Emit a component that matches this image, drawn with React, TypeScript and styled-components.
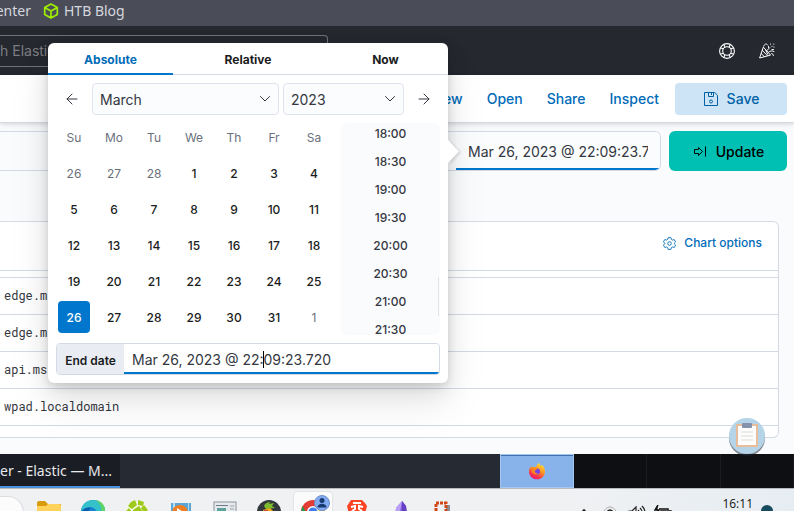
import React, { useEffect, useRef } from "react";
import styled, { createGlobalStyle } from "styled-components";

const c = {
  line: "#d3dae6",
  page: "#fafbfd",
  text: "#343741",
  ink: "#1a1c21",
  muted: "#69707d",
  link: "#006bb8",
  primary: "#0077cc",
};
const inter = `Inter, "Liberation Sans", sans-serif`;
const noto = `"Noto Sans", sans-serif`;

const Global = createGlobalStyle`
  *, *::before, *::after { box-sizing: border-box; }
  body { margin: 0; background: ${c.page}; }
  button, input, select { font: inherit; color: inherit; margin: 0; }
  button { border: 0; padding: 0; background: none; cursor: pointer; }
  svg { display: block; flex: none; }
`;

const Screen = styled.div`
  position: relative;
  height: 100vh;
  overflow: hidden;
  display: flex;
  flex-direction: column;
  font-family: ${inter};
  font-size: 14px;
  line-height: 20px;
  color: ${c.text};
  background: ${c.page};
  > * { flex: none; }
`;

const Bookmarks = styled.nav`
  display: flex;
  align-items: center;
  gap: 12px;
  height: 26px;
  padding-bottom: 4px;
  background: #4a4d58;
  color: #d5d7de;
  font-family: ${noto};
  font-size: 14px;
`;
const Bookmark = styled.a<{ $cut?: boolean }>`
  display: flex;
  align-items: center;
  justify-content: flex-end;
  gap: 5px;
  width: ${(p) => (p.$cut ? "31px" : "auto")};
  color: inherit;
  text-decoration: none;
`;

const Header = styled.header`
  display: flex;
  align-items: center;
  justify-content: space-between;
  height: 49px;
  padding-right: 19px;
  background: #25282f;
  color: #fff;
`;
const SearchBox = styled.input`
  width: 328px;
  height: 32px;
  padding: 0;
  border: 1px solid #6f7277;
  border-left: 0;
  border-radius: 0 4px 4px 0;
  background: transparent;
  outline: 0;
  &::placeholder { color: #7b7d82; opacity: 1; }
`;
const HeaderIcons = styled.div`
  display: flex;
  gap: 24px;
`;

const Toolbar = styled.nav`
  position: relative;
  display: flex;
  align-items: center;
  justify-content: flex-end;
  gap: 8px;
  height: 48px;
  padding-right: 7px;
  background: #fff;
  border-bottom: 1px solid ${c.line};
  box-shadow: 0 1px 4px rgba(0, 0, 0, 0.12), 0 3px 8px rgba(0, 0, 0, 0.04);
`;
const ToolLink = styled.button`
  padding: 0 8px;
  color: ${c.link};
  font-weight: 500;
`;
const SaveButton = styled.button`
  display: flex;
  align-items: center;
  justify-content: center;
  gap: 8px;
  width: 112px;
  height: 32px;
  border-radius: 4px;
  background: #cce4f5;
  color: #0061a6;
  font-weight: 500;
`;

const QueryBar = styled.section`
  display: flex;
  gap: 8px;
  padding: 8px 7px 50px 0;
`;
const RangeControl = styled.div`
  display: flex;
  flex: 1;
  justify-content: flex-end;
  height: 40px;
  border: 1px solid ${c.line};
  border-left: 0;
  border-radius: 0 6px 6px 0;
  overflow: hidden;
`;
const RangeEnd = styled.input`
  width: 204px;
  padding: 2px 12px 0;
  border: 0;
  outline: 0;
  background: linear-gradient(${c.primary}, ${c.primary}) bottom / 100% 2px no-repeat #fbfcfd;
`;
const UpdateButton = styled.button`
  display: flex;
  align-items: center;
  justify-content: center;
  gap: 8px;
  width: 118px;
  height: 40px;
  padding-top: 2px;
  border-radius: 6px;
  background: #00bfb3;
  color: #000;
  font-weight: 500;
`;

const Panel = styled.section`
  margin: 0 15px 16px 0;
  padding-bottom: 11px;
  background: #fff;
  border: 1px solid ${c.line};
  border-left: 0;
  border-radius: 0 6px 6px 0;
`;
const PanelHead = styled.div`
  display: flex;
  justify-content: flex-end;
  padding: 11px 16px 17px;
`;
const ChartOptions = styled.button`
  display: flex;
  align-items: center;
  gap: 8px;
  color: ${c.link};
  font-size: 12px;
  font-weight: 500;
`;
const Hosts = styled.table`
  width: 100%;
  border-collapse: collapse;
  font: 12px/20px "Roboto Mono", "Liberation Mono", monospace;
  th { height: 7px; padding: 0; border: solid ${c.line}; border-width: 1px 0; }
  td { height: 37px; padding: 0 4px 3px; border-bottom: 1px solid ${c.line}; }
`;

const TaskPanel = styled.footer`
  display: flex;
  justify-content: space-between;
  height: 34px;
  background: #262a33;
  color: #e8e9eb;
  font-family: ${noto};
`;
const TaskButton = styled.button`
  width: 120px;
  padding: 2px 10px 0 0;
  text-align: right;
  white-space: nowrap;
  background: #1a1d24;
  border-bottom: 2px solid #4b8fe0;
`;
const Pager = styled.div`
  display: grid;
  grid-template-columns: repeat(4, 1fr);
  width: 37%;
`;
const Workspace = styled.button<{ $active?: boolean }>`
  display: grid;
  place-items: center;
  background: ${(p) => (p.$active ? "#88b2ea" : "#0e0f13")};
  border: ${(p) => (p.$active ? "1px solid #a4c7f2" : "0 solid #1a1c21")};
  border-right-width: 1px;
  box-shadow: ${(p) => (p.$active ? "inset 0 1px #3f70aa" : "none")};
`;

const DesktopBar = styled.footer`
  display: flex;
  justify-content: space-between;
  height: 47px;
  border-top: 1px solid #b9babd;
  background: linear-gradient(90deg, #f0f1f3 70%, #e6edf2);
  color: #111;
`;
const Apps = styled.div`
  display: flex;
  align-items: center;
`;
const StartSearch = styled.span`
  width: 24px;
  height: 32px;
  margin-right: 3px;
  border: 1px solid #dcdee1;
  border-left: 0;
  border-radius: 0 16px 16px 0;
  background: #fcfcfd;
`;
const AppButton = styled.button<{ $open?: boolean }>`
  display: grid;
  place-items: center;
  position: relative;
  width: 38px;
  height: 40px;
  margin: 0 3px;
  border-radius: 4px;
  background: ${(p) => (p.$open ? "#fbfbfc" : "transparent")};
  box-shadow: ${(p) => (p.$open ? "0 0 1px 1px #e2e3e5" : "none")};
`;
const Person = styled.span`
  position: absolute;
  top: 3px;
  right: 2px;
`;
const Tray = styled.div`
  display: flex;
  align-items: flex-start;
  gap: 8px;
  padding: 5px 21px 0 0;
`;
const TrayIcons = styled.div`
  display: flex;
  gap: 8px;
  padding: 11px 42px 0 0;
`;
const Clock = styled.time`
  font: 12px/20px "Open Sans", "Noto Sans", sans-serif;
`;
const Notice = styled.span`
  width: 12px;
  height: 12px;
  margin-top: 11px;
  border-radius: 50%;
  background: #164b5f;
`;

const Clip = styled.button`
  position: absolute;
  right: 28px;
  top: 417px;
`;

/* Date popover */
const Popover = styled.section`
  position: absolute;
  left: 48px;
  top: 43px;
  width: 400px;
  border-radius: 6px;
  background: #fff;
  box-shadow: 0 3px 9px rgba(0, 0, 0, 0.13), 0 9px 24px rgba(0, 0, 0, 0.09),
    0 22px 43px rgba(0, 0, 0, 0.08);
`;
const Pointer = styled.span`
  position: absolute;
  left: 100%;
  top: 97px;
  filter: drop-shadow(2px 1px 1px rgba(0, 0, 0, 0.12));
`;
const Tabs = styled.div`
  display: grid;
  grid-template-columns: 5fr 6fr 5fr;
`;
const Tab = styled.button<{ $on?: boolean }>`
  height: 32px;
  padding-top: 2px;
  font-size: 12px;
  font-weight: 700;
  color: ${(p) => (p.$on ? c.link : c.ink)};
  box-shadow: inset 0 ${(p) => (p.$on ? `-2px ${c.primary}` : `-1px ${c.line}`)};
`;
const MonthNav = styled.div`
  display: grid;
  grid-template-columns: 32px 187fr 121fr 32px;
  gap: 4px;
  padding: 8px 8px 4px;
`;
const IconButton = styled.button`
  display: grid;
  place-items: center;
`;
const Picker = styled.label`
  display: grid;
  align-items: center;
  > * { grid-area: 1 / 1; }
  > svg { justify-self: end; margin-right: 6px; pointer-events: none; }
`;
const Select = styled.select`
  appearance: none;
  height: 32px;
  padding: 2px 28px 0 7px;
  border: 1px solid #e0e3ee;
  border-radius: 4px;
  background: #fbfcfd;
  outline: 0;
`;
const Body = styled.div`
  display: flex;
  justify-content: space-between;
  padding: 0 8px 8px 6px;
`;
const Month = styled.table`
  border-collapse: collapse;
  font-size: 12px;
  text-align: center;
  th, td { width: 40px; height: 36px; padding: 0; }
  th { padding-top: 2px; font-weight: 400; color: ${c.muted}; }
`;
const Day = styled.button<{ $out?: boolean; $on?: boolean }>`
  display: block;
  width: 32px;
  height: 32px;
  margin: 0 auto;
  padding-top: 2px;
  border-radius: 4px;
  font-weight: ${(p) => (p.$out ? 400 : 500)};
  color: ${(p) => (p.$on ? "#fff" : p.$out ? c.muted : c.ink)};
  background: ${(p) => (p.$on ? c.primary : "transparent")};
`;
const TimeBox = styled.div`
  position: relative;
  width: 99px;
  height: 212px;
  margin-top: 4px;
`;
const Times = styled.ul`
  height: 100%;
  margin: 0;
  padding: 0;
  overflow: hidden;
  list-style: none;
  border-radius: 6px;
  background: #fafbfd;
  font-size: 12px;
  font-weight: 500;
  button { display: block; width: 100%; height: 28px; padding-top: 2px; }
`;
const Thumb = styled.span`
  position: absolute;
  right: 1px;
  bottom: 19px;
  width: 1px;
  height: 39px;
  background: #e3e4ea;
`;
const EndRow = styled.div`
  display: flex;
  height: 32px;
  margin: 0 8px 8px;
  border: 1px solid ${c.line};
  border-radius: 4px;
  overflow: hidden;
`;
const EndLabel = styled.label`
  width: 67px;
  padding-top: 1px;
  background: #e9edf3;
  font-size: 12px;
  font-weight: 600;
  line-height: 32px;
  text-align: center;
  color: ${c.ink};
`;
const EndField = styled.div`
  position: relative;
  display: flex;
  flex: 1;
`;
const EndInput = styled.input`
  flex: 1;
  min-width: 0;
  padding: 2px 8px 0;
  border: 0;
  outline: 0;
  background: linear-gradient(${c.primary}, ${c.primary}) bottom / 100% 2px no-repeat #fff;
`;
const Caret = styled.span`
  position: absolute;
  left: 139px;
  top: 7px;
  width: 1px;
  height: 17px;
  background: #000;
`;

const Chevron = () => (
  <svg width="16" height="16" viewBox="0 0 16 16" fill="none" stroke="#343741" strokeLinecap="round" strokeLinejoin="round">
    <path d="M3.500 5.500L8 10l4.500-4.500" />
  </svg>
);
const Arrow = ({ right }: { right?: boolean }) => (
  <svg width="16" height="16" viewBox="0 0 16 16" fill="none" stroke="#343741" strokeLinecap="round" strokeLinejoin="round">
    {right ? <path d="M3 8h10M8 3l5 5-5 5" /> : <path d="M13 8H3M8 3L3 8l5 5" />}
  </svg>
);
const Cube = () => (
  <svg width="16" height="16" viewBox="0 0 16 16" fill="none" stroke="#9fef00" strokeWidth="1.700" strokeLinejoin="round">
    <path d="M8 1l6.300 3.400v7.200L8 15l-6.300-3.400V4.400zM1.700 4.400L8 8l6.300-3.600M8 8v7" />
  </svg>
);
const LifeBuoy = () => (
  <svg width="16" height="16" viewBox="0 0 16 16" fill="none" stroke="#fff" strokeWidth="1.100">
    <circle cx="8" cy="8" r="7.400" />
    <circle cx="8" cy="8" r="4.300" />
    <path d="M1.600 5l2.800.8M5 1.600l.8 2.800M11 1.600l-.8 2.800M14.400 5l-2.800.8M14.400 11l-2.800-.8M11 14.400l-.8-2.800M5 14.400l.8-2.800M1.600 11l2.800-.8" />
  </svg>
);
const Party = () => (
  <svg width="16" height="16" viewBox="0 0 16 16" fill="none" stroke="#fff" strokeLinecap="round" strokeLinejoin="round">
    <path d="M4.200 4.500L.6 15l10.600-2.800zM3.300 7.300l5.200 5.500M2.200 10.500l3.200 3.300M6.500 6.700l2.200 4.500M4.700 3.200c.8-2.500 3-3 4-1.200M8 7.500l2.700-2.800M9.500 9.200c1.600-1.400 3.500-1.800 5.500-.7M12.700 10.500c1 .2 1.700 1 1.700 2M9.500 4.500v-1M13 6.500h1.500M11.500 1v.2M14.800 1v.2M13 3.300v.2M15 4v.2" />
  </svg>
);
const Disk = () => (
  <svg width="16" height="16" viewBox="0 0 16 16" fill="none" stroke="#0061a6">
    <path d="M1.500 1.500h10.200l2.800 2.800v10.200h-13zM5.500 1.500v4h5v-4M8.500 2v2" />
    <circle cx="8" cy="10.500" r="1.500" />
  </svg>
);
const UpdateIcon = () => (
  <svg width="16" height="16" viewBox="0 0 16 16" fill="none" stroke="#000" strokeLinejoin="round">
    <path d="M13.500 2.500v10M2.500 5.500h4v-2l4 4-4 4v-2h-4z" />
  </svg>
);
const Gear = () => (
  <svg width="13" height="13" viewBox="0 0 16 16" fill="none" stroke={c.link} strokeWidth="1.100" strokeLinejoin="round">
    <path d="M6.300.8h3.400l.6 2.200 1.300.8 2.200-.6 1.700 2.900L13.900 7.700v.8l1.600 1.500-1.700 2.900-2.200-.6-1.300.8-.6 2.200H6.300L5.700 13l-1.300-.7-2.200.6L.5 10l1.600-1.600v-.8L.5 6l1.700-2.900 2.200.7 1.300-.8z" />
    <circle cx="8" cy="8" r="2.200" />
  </svg>
);
const Firefox = () => (
  <svg width="18" height="18" viewBox="0 0 18 18">
    <defs>
      <linearGradient id="fx" x1="0.8" y1="0" x2="0.3" y2="1">
        <stop offset="0" stopColor="#ffe63c" />
        <stop offset="0.45" stopColor="#ff9323" />
        <stop offset="0.8" stopColor="#f9304d" />
        <stop offset="1" stopColor="#e5127c" />
      </linearGradient>
    </defs>
    <path fill="url(#fx)" d="M11 1c1 1.200 1.200 2.400 2 3 .6-.3.700-.8.700-1.200C16 4.500 17 7 17 9.500c0 4.500-3.500 7.800-8 7.800s-8-3.300-8-7.800C1 7.500 1.700 6 2.500 4.800L3 6l1-2 1 1.300c1-.5 2-.4 3-.3C8.500 3.500 9.500 2 11 1z" />
    <circle cx="9" cy="9.500" r="3" fill="#7542e5" />
    <path fill="#ff8a1c" d="M4 6c2-.7 4-.2 5.500 1-1.500.2-1.300 1.600-3 1.800.4 2 2 3 4 2.600-2 1.700-6 .8-6.500-2z" />
  </svg>
);

const icons: { name: string; open?: boolean; art: React.ReactNode }[] = [
  {
    name: "Files",
    art: (
      <>
        <path fill="#d99b0b" d="M0 3a2 2 0 012-2h6l3 3h13v6H0z" />
        <path fill="#ffd35b" d="M0 6h9l2-2h11a2 2 0 012 2v15H0z" />
      </>
    ),
  },
  {
    name: "Edge",
    art: (
      <>
        <circle cx="12" cy="12" r="12" fill="#1683d1" />
        <path fill="#35c1c9" d="M0 11C1 4 6 0 12 0c7 0 12 5 12 10 0 4-3 6-6 6s-4-1-3-3c1-4-3-6-6-6-4 0-7 2-9 4z" />
        <path fill="#5fd565" d="M15 0c5 1 9 5 9 10 0 4-3 6-6 6 4-5 3-11-3-16z" />
        <path fill="#0c5da8" d="M1 12c2-4 6-5 9-4-4 2-4 10 3 16C5 24 0 19 1 12z" />
      </>
    ),
  },
  {
    name: "Android",
    art: (
      <>
        <circle cx="12" cy="12" r="11.500" fill="#f3f7e4" />
        <path fill="#9fca1c" d="M6 2l4-2 2 5-5 4-4-3zM13 0l6 2-1 4-5-1zM19 5l4 5-4 3-3-5zM0 12l4-4 3 4-2 8zM8 10l6-4 4 6-4 5-6-1z" />
      </>
    ),
  },
  {
    name: "Media player",
    art: (
      <>
        <rect x="2" y="3" width="20" height="18" fill="#5ba6d6" />
        <path fill="#b8dcf1" d="M4 3h2v18H4zM19 3h1v18h-1z" />
        <circle cx="11" cy="13" r="8" fill="#f07d22" />
        <path fill="#fff" d="M8 8l8 5-8 5z" />
      </>
    ),
  },
  {
    name: "Monitor",
    art: (
      <>
        <rect x="1" y="2" width="22" height="20" fill="#e5e9ed" stroke="#8b949c" />
        <path fill="#6d7a86" d="M3 5h12v1H3z" />
        <path fill="#5aa29a" d="M4 8h9v10H4z" />
        <path stroke="#98a2aa" d="M17 6h4M17 9h4M17 12h4" />
      </>
    ),
  },
  {
    name: "Game",
    art: (
      <>
        <circle cx="12" cy="12" r="12" fill="#33383d" />
        <path fill="#7cbb2c" d="M7 6c1-3 4-4 6-4l-1 2 5-1-2 3 3 2-9 1z" />
        <path fill="#f1aa19" d="M6 10l7-2 4 4-6 8-5-3z" />
        <path fill="#d2452a" d="M7 10h4v4H7z" />
      </>
    ),
  },
  {
    name: "Chrome",
    open: true,
    art: (
      <>
        <circle cx="12" cy="12" r="12" fill="#e13d34" />
        <path fill="#1f9b4f" d="M1.500 6L9 19l2 5C4 24-2 15 1.500 6z" />
        <path fill="#fbc31c" d="M13 24c10-1 13-10 9.500-17H12z" />
        <circle cx="12" cy="12" r="6" fill="#fff" />
        <circle cx="12" cy="12" r="4.500" fill="#3e7df0" />
      </>
    ),
  },
  {
    name: "Brave",
    art: (
      <>
        <path fill="#fb4524" d="M6 0h11l3 3 2 3-1 4-2 9-7 5-7-5-2-9-1-4 2-3z" />
        <path stroke="#fff" strokeWidth="2" fill="none" d="M6 7l4-1v3l-3 2M18 7l-4-1v3l3 2M8 3h8" />
      </>
    ),
  },
  {
    name: "Obsidian",
    art: (
      <>
        <path fill="#8762df" d="M13 1l4 5 1 8-5 9-7-4 1-11z" />
        <path fill="#b9a0f5" d="M13 1l-6 7-1 8 5-5z" />
        <path fill="#6640c4" d="M13 1l4 5 1 8-5 7z" />
      </>
    ),
  },
  {
    name: "Snip",
    art: (
      <>
        <path fill="#8b9096" d="M12 5h5v17H7v-3h5z" />
        <rect x="3" y="3" width="10" height="14" fill="#eef1f4" stroke="#d04617" strokeWidth="3" strokeDasharray="3 1" />
      </>
    ),
  },
];

const weekdays = ["Su", "Mo", "Tu", "We", "Th", "Fr", "Sa"];
const weeks = [
  [26, 27, 28, 1, 2, 3, 4],
  [5, 6, 7, 8, 9, 10, 11],
  [12, 13, 14, 15, 16, 17, 18],
  [19, 20, 21, 22, 23, 24, 25],
  [26, 27, 28, 29, 30, 31, 1],
];
const times = ["18:00", "18:30", "19:00", "19:30", "20:00", "20:30", "21:00", "21:30"];

function TimeList() {
  const ref = useRef<HTMLUListElement>(null);
  useEffect(() => {
    if (ref.current) ref.current.scrollTop = 4;
  }, []);
  return (
    <TimeBox>
      <Times ref={ref}>
        {times.map((t) => (
          <li key={t}><button>{t}</button></li>
        ))}
      </Times>
      <Thumb />
    </TimeBox>
  );
}

function DatePopover() {
  return (
    <Popover aria-label="End date">
      <Pointer>
        <svg width="12" height="24" viewBox="0 0 12 24"><path fill="#fff" d="M0 0l11 11.500L0 23z" /></svg>
      </Pointer>
      <Tabs role="tablist">
        <Tab role="tab" aria-selected $on>Absolute</Tab>
        <Tab role="tab">Relative</Tab>
        <Tab role="tab">Now</Tab>
      </Tabs>
      <MonthNav>
        <IconButton aria-label="Previous month"><Arrow /></IconButton>
        <Picker>
          <Select aria-label="Month" defaultValue="March"><option>March</option></Select>
          <Chevron />
        </Picker>
        <Picker>
          <Select aria-label="Year" defaultValue="2023"><option>2023</option></Select>
          <Chevron />
        </Picker>
        <IconButton aria-label="Next month"><Arrow right /></IconButton>
      </MonthNav>
      <Body>
        <Month>
          <thead>
            <tr>{weekdays.map((d) => <th key={d}>{d}</th>)}</tr>
          </thead>
          <tbody>
            {weeks.map((week, w) => (
              <tr key={w}>
                {week.map((d) => (
                  <td key={d}>
                    <Day $out={(w === 0 && d > 20) || (w === 4 && d < 10)} $on={w === 4 && d === 26}>{d}</Day>
                  </td>
                ))}
              </tr>
            ))}
          </tbody>
        </Month>
        <TimeList />
      </Body>
      <EndRow>
        <EndLabel htmlFor="end-date">End date</EndLabel>
        <EndField>
          <EndInput id="end-date" defaultValue="Mar 26, 2023 @ 22:09:23.720" />
          <Caret />
        </EndField>
      </EndRow>
    </Popover>
  );
}

export default function App() {
  return (
    <Screen>
      <Global />
      <Bookmarks>
        <Bookmark href="#" $cut>enter</Bookmark>
        <Bookmark href="#"><Cube />HTB Blog</Bookmark>
      </Bookmarks>
      <Header>
        <SearchBox aria-label="Search" placeholder="h Elastic" />
        <HeaderIcons>
          <IconButton aria-label="Help"><LifeBuoy /></IconButton>
          <IconButton aria-label="News"><Party /></IconButton>
        </HeaderIcons>
      </Header>
      <Toolbar>
        <ToolLink>New</ToolLink>
        <ToolLink>Open</ToolLink>
        <ToolLink>Share</ToolLink>
        <ToolLink>Inspect</ToolLink>
        <SaveButton><Disk />Save</SaveButton>
      </Toolbar>
      <QueryBar>
        <RangeControl>
          <RangeEnd aria-label="Range end" defaultValue="Mar 26, 2023 @ 22:09:23.7" />
        </RangeControl>
        <UpdateButton><UpdateIcon />Update</UpdateButton>
      </QueryBar>
      <Panel>
        <PanelHead>
          <ChartOptions><Gear />Chart options</ChartOptions>
        </PanelHead>
        <Hosts>
          <thead><tr><th aria-label="Host" /></tr></thead>
          <tbody>
            {["edge.m", "edge.m", "api.ms", "wpad.localdomain"].map((h, i) => (
              <tr key={i}><td>{h}</td></tr>
            ))}
          </tbody>
        </Hosts>
      </Panel>
      <TaskPanel>
        <TaskButton>er - Elastic — M...</TaskButton>
        <Pager>
          <Workspace $active aria-label="Workspace 1"><Firefox /></Workspace>
          <Workspace aria-label="Workspace 2" />
          <Workspace aria-label="Workspace 3" />
          <Workspace aria-label="Workspace 4" />
        </Pager>
      </TaskPanel>
      <DesktopBar>
        <Apps>
          <StartSearch />
          {icons.map((i) => (
            <AppButton key={i.name} aria-label={i.name} $open={i.open}>
              <svg width="24" height="24" viewBox="0 0 24 24">{i.art}</svg>
              {i.open && (
                <Person>
                  <svg width="16" height="16" viewBox="0 0 16 16">
                    <circle cx="8" cy="8" r="7.500" fill="#82aaf0" stroke="#6b8fc9" />
                    <circle cx="8" cy="5.500" r="2.500" fill="#173a70" />
                    <path fill="#173a70" d="M3.500 12.500c0-5 9-5 9 0z" />
                  </svg>
                </Person>
              )}
            </AppButton>
          ))}
        </Apps>
        <Tray>
          <TrayIcons>
            <svg width="16" height="16" viewBox="0 0 16 16" fill="none" stroke="#222" strokeWidth="1.600"><path d="M3 10l5-5 5 5" /></svg>
            <svg width="20" height="16" viewBox="0 0 20 16" fill="none"><path d="M3 8c4-8 10-8 14 0" stroke="#aaa" /><path d="M6 8c3-4 5-4 8 0" stroke="#222" strokeWidth="1.500" /></svg>
            <svg width="18" height="16" viewBox="0 0 18 16" fill="none" stroke="#222" strokeWidth="1.200"><path d="M1 6h3l4-4v12l-4-4H1zM10 5c2 2 2 4 0 6M12 3c3 3 3 7 0 10M14 1c4 4 4 10 0 14" /></svg>
            <svg width="18" height="16" viewBox="0 0 18 16" fill="none" stroke="#111" strokeWidth="1.500"><path d="M5 4h9v8H3V8M15 6h2v4h-2" /><path fill="#111" d="M4 0L1 5h4L3 8" /><path fill="#111" d="M7 6h5v4H7z" /></svg>
          </TrayIcons>
          <Clock>16:11</Clock>
          <Notice />
        </Tray>
      </DesktopBar>
      <Clip aria-label="Clipboard">
        <svg width="38" height="40" viewBox="0 0 38 40">
          <circle cx="19" cy="21" r="18" fill="#1d2735" opacity="0.550" />
          <circle cx="19" cy="19" r="18" fill="#b5d4e8" />
          <rect x="9" y="8" width="20" height="21" fill="#fdfdfd" stroke="#e8bd9c" strokeWidth="2" />
          <rect x="14" y="6" width="10" height="5" rx="1" fill="#8492ab" />
          <path stroke="#e6e6e1" strokeWidth="1.500" d="M13 15h12M13 19h12M13 23h12" />
        </svg>
      </Clip>
      <DatePopover />
    </Screen>
  );
}
